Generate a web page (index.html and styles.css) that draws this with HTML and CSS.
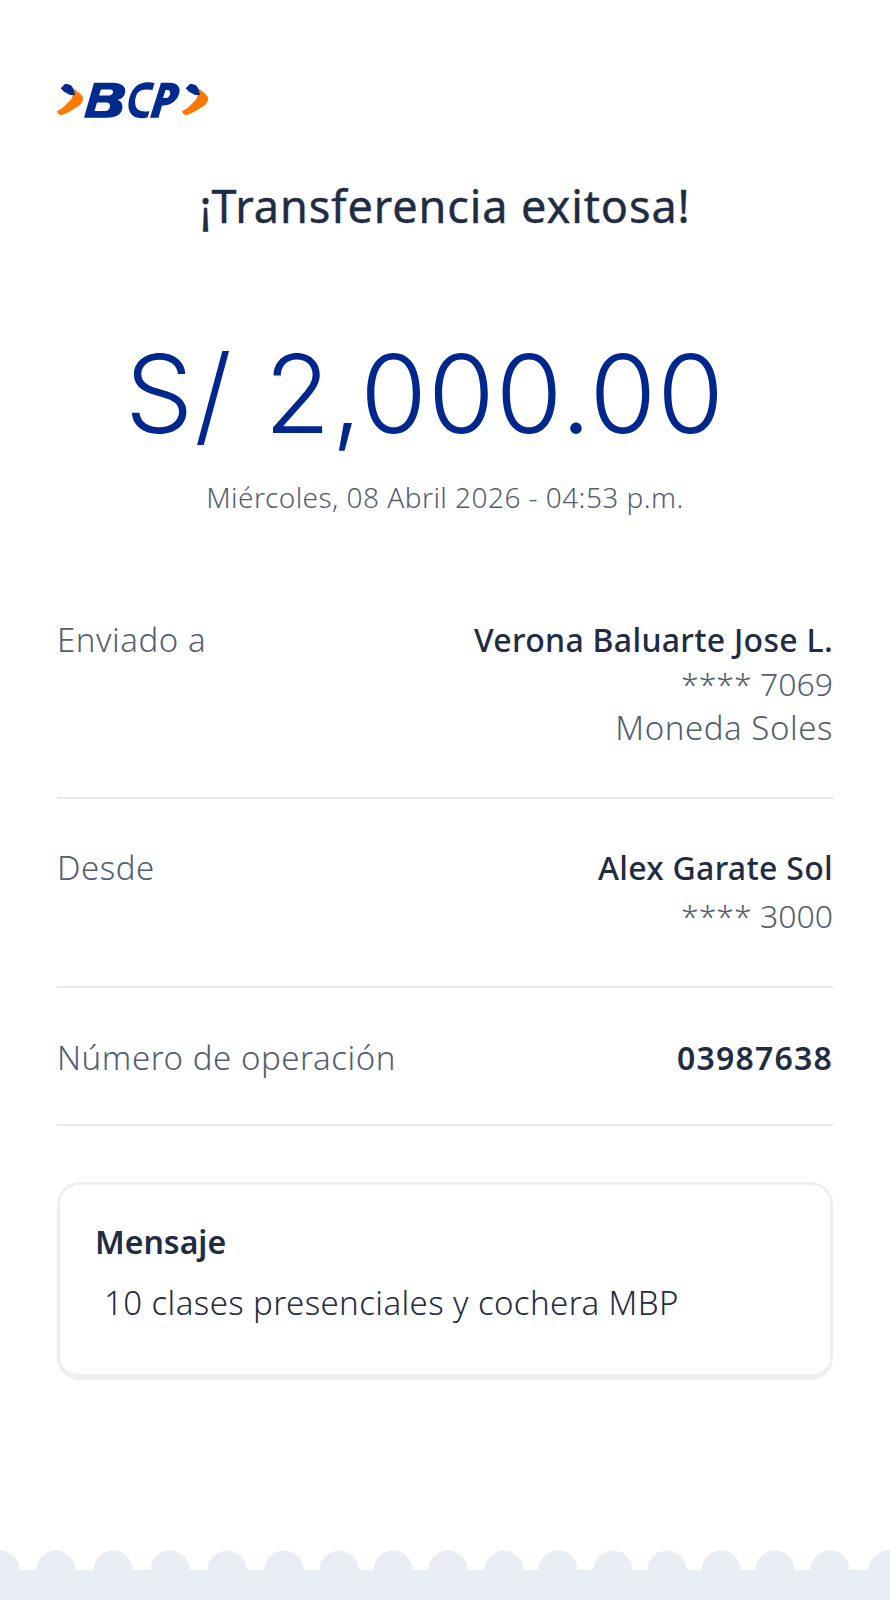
FILE: index.html
```html
<!DOCTYPE html>
<html lang="es">
<head>
    <meta charset="UTF-8">
    <meta name="viewport" content="width=device-width, initial-scale=1.0">
    <title>Transferencia exitosa</title>
    <link rel="stylesheet" href="styles.css">
</head>
<body>
    <div class="receipt">
        <header class="brand">
            <svg class="brandLogo" viewBox="0 0 152 40" width="152" height="40" aria-label="BCP">
                <path fill="#ff7800" d="M15.7 8.3 C20 11 24 14 25.7 16.7 C26.5 19 25.5 23 23 25 C17 29 11 33 4.7 35 C2.5 35.5 0.5 33.5 0 31 C4 29.5 7 27 10 23.5 C13 21 15 18.5 15.5 16Z"/>
                <path fill="#002a8d" d="M3.7 8.3 L8 4 C11 4 13 4.5 14.7 6 C16.5 8.5 17.5 12 18 15 L13 15 C11 13.5 9 12.5 7 11.7Z"/>
                <path fill="#ff7800" d="M140.7 8.3 C145 11 149 14 150.7 16.7 C151.5 19 150.5 23 148 25 C142 29 136 33 129.7 35 C127.5 35.5 125.5 33.5 125 31 C129 29.5 132 27 135 23.5 C138 21 140 18.5 140.5 16Z"/>
                <path fill="#002a8d" d="M128.7 8.3 L133 4 C136 4 138 4.5 139.7 6 C141.5 8.5 142.5 12 143 15 L138 15 C136 13.5 134 12.5 132 11.7Z"/>
                <path fill="#002a8d" fill-rule="evenodd" d="M37 2.7 H56 C66 2.7 69.5 8 68 13 C67 17 64 19 60.5 20 C64.5 21 66.5 25 65 30 C63 36 57 37.7 50 37.7 H27Z M44 9.5 L42 15.5 H52 C56.5 15.5 58 9.5 53 9.5Z M40 22.5 L37.5 31 H48 C54 31 55 22.5 49.5 22.5Z"/>
                <path fill="#002a8d" transform="translate(1.5 0)" d="M96 3 L94 10 C88 9 82 9 79 13 C76 18 76 24 78 28 C81 32 87 32 91 31 L89 37.5 C82 39 75 38 72 33 C68 27 70 15 76 8 C81 2 90 1.5 96 3Z"/>
                <path fill="#002a8d" fill-rule="evenodd" d="M104 2.7 H113 C121 2.7 124 8 122 14 C120 21 113 25.5 106 25.5 H105 L101.5 37.7 H93Z M108.5 10 L106 18 H109 C113.5 18 115 10 110.5 10Z"/>
            </svg>
        </header>

        <h1 class="statusTitle">¡Transferencia exitosa!</h1>

        <div class="amount">S/ 2,000.00</div>
        <p class="dateLine">Miércoles, 08 Abril 2026 - 04:53 p.m.</p>

        <section class="details">
            <div class="detailRow rowSent">
                <span class="detailLabel">Enviado a</span>
                <div class="detailValue">
                    <strong>Verona Baluarte Jose L.</strong>
                    <span class="accountNumber">**** 7069</span>
                    <span>Moneda Soles</span>
                </div>
            </div>
            <div class="detailRow rowFrom">
                <span class="detailLabel">Desde</span>
                <div class="detailValue">
                    <strong>Alex Garate Sol</strong>
                    <span class="accountNumber accountLine">**** 3000</span>
                </div>
            </div>
            <div class="detailRow rowOperation">
                <span class="detailLabel">Número de operación</span>
                <div class="detailValue">
                    <strong class="operationNumber">03987638</strong>
                </div>
            </div>
        </section>

        <section class="messageCard">
            <h2>Mensaje</h2>
            <p>10 clases presenciales y cochera MBP</p>
        </section>
    </div>

    <footer class="ticketEdge">
        <svg viewBox="0 0 890 50" width="890" height="50" fill="#e9edf4">
            <circle cx="0" cy="20" r="19.5"/>
            <circle cx="56" cy="20" r="19.5"/>
            <circle cx="113" cy="20" r="19.5"/>
            <circle cx="170" cy="20" r="19.5"/>
            <circle cx="227" cy="20" r="19.5"/>
            <circle cx="284" cy="20" r="19.5"/>
            <circle cx="339" cy="20" r="19.5"/>
            <circle cx="393" cy="20" r="19.5"/>
            <circle cx="448" cy="20" r="19.5"/>
            <circle cx="504" cy="20" r="19.5"/>
            <circle cx="558" cy="20" r="19.5"/>
            <circle cx="613" cy="20" r="19.5"/>
            <circle cx="667" cy="20" r="19.5"/>
            <circle cx="721" cy="20" r="19.5"/>
            <circle cx="775" cy="20" r="19.5"/>
            <circle cx="830" cy="20" r="19.5"/>
            <circle cx="888" cy="20" r="19.5"/>
            <rect x="0" y="20" width="890" height="30"/>
        </svg>
    </footer>
</body>
</html>
```

FILE: styles.css
```css
html, body {
    margin: 0;
    height: 1600px;
    overflow: hidden;
}

body {
    font-family: 'Noto Sans', 'Open Sans', sans-serif;
    background-color: #fff;
    color: #1f2c44;
    display: flex;
    flex-direction: column;
}

.receipt {
    flex: 1;
    padding: 80px 57px 0;
}

.brand {
    height: 40px;
}

.brandLogo {
    display: block;
}

.statusTitle {
    margin: 54px 0 0;
    font-size: 45px;
    line-height: 64px;
    letter-spacing: 0.9px;
    font-weight: 400;
    -webkit-text-stroke: 0.4px #1f2c44;
    text-align: center;
}

.amount {
    margin-top: 88px;
    padding-right: 40px;
    font-family: 'Inter', 'Noto Sans', sans-serif;
    font-size: 108px;
    line-height: 136px;
    letter-spacing: 1px;
    font-weight: 340;
    color: #00288c;
    text-align: center;
}

.dateLine {
    margin: 15px 0 0;
    font-size: 28px;
    line-height: 40px;
    letter-spacing: 0.45px;
    font-weight: 300;
    color: #525e72;
    text-align: center;
}

.details {
    margin-top: 101px;
}

.detailRow {
    display: flex;
    justify-content: space-between;
    border-bottom: 2px solid #e6e8ec;
    font-size: 33px;
    line-height: 44px;
    letter-spacing: 0.55px;
    font-weight: 300;
}

.rowSent {
    height: 179px;
}

.rowFrom {
    padding-top: 47px;
    height: 140px;
}

.rowOperation {
    padding-top: 48px;
    height: 88px;
}

.detailLabel {
    color: #525e72;
}

.detailValue {
    display: flex;
    flex-direction: column;
    text-align: right;
    color: #525e72;
}

.detailValue strong {
    font-size: 32px;
    font-weight: 500;
    letter-spacing: 0.3px;
    color: #1f2c44;
}

.accountNumber {
    font-size: 32px;
    letter-spacing: 0;
}

.accountLine {
    margin-top: 4px;
}

.detailValue .operationNumber {
    font-weight: 600;
    letter-spacing: 1.2px;
}

.messageCard {
    box-sizing: border-box;
    height: 198px;
    margin-top: 56px;
    padding: 35px 35px;
    border: 3px solid #eeeff1;
    border-bottom-width: 6px;
    border-radius: 22px;
}

.messageCard h2 {
    margin: 0;
    font-size: 32px;
    line-height: 44px;
    font-weight: 600;
}

.messageCard p {
    margin: 17px 0 0 9px;
    font-size: 33px;
    line-height: 44px;
    letter-spacing: 0.4px;
    font-weight: 300;
    color: #1f2c44;
}

.ticketEdge {
    height: 50px;
}

.ticketEdge svg {
    display: block;
}
```
